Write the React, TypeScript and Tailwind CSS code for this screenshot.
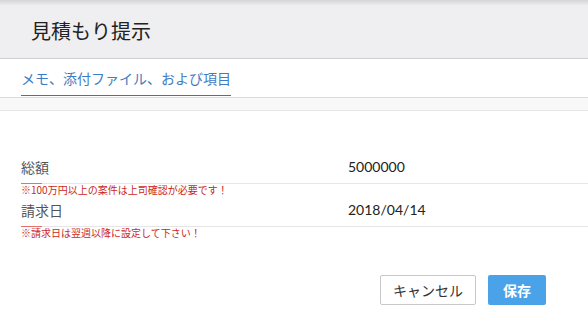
const JP = "font-['Noto_Sans_CJK_JP','Noto_Sans',sans-serif]";

type Field = { label: string; value: string; note: string };

const FIELDS: Field[] = [
  { label: '総額', value: '5000000', note: '※100万円以上の案件は上司確認が必要です！' },
  { label: '請求日', value: '2018/04/14', note: '※請求日は翌週以降に設定して下さい！' },
];

export default function App() {
  return (
    <main className={`flex h-[319px] w-[588px] flex-col overflow-hidden bg-white ${JP}`}>
      {/* ヘッダー */}
      <header className="flex h-[59px] items-center border-b border-[#cfcfd3] bg-[linear-gradient(to_bottom,#d4d4d6,#efeff1_6px)] pl-[31px]">
        <h1 className="text-[20px] leading-[28px] text-[#222] pt-[4px]">見積もり提示</h1>
      </header>

      {/* タブ */}
      <nav className="flex h-[39px] border-b border-[#dcdcdf] pl-[21px]">
        <div className="h-[37px] border-b border-[#3a75b8] pt-[9px] pb-[7px] text-[14px] leading-[20px] text-[#3f7dc2]">
          メモ、添付ファイル、および項目
        </div>
      </nav>
      <div className="h-[13px] border-b border-[#e6e6e8] bg-[#f8f8f9]" />

      {/* 項目 */}
      <section className="pl-[21px] pt-[46px]">
        {FIELDS.map((f, i) => (
          <div key={f.label} className={i > 0 ? 'pt-[4px]' : ''}>
            <div className="flex pb-[6px] text-[14px] leading-[20px]">
              <span className="w-[327px] text-[#555]">{f.label}</span>
              <span className="font-['Lato','Open_Sans',sans-serif] text-[14px] text-[#222]">{f.value}</span>
            </div>
            <div className="flex h-px">
              <div className="w-[21px] bg-[#e8706a]" />
              <div className="flex-1 bg-[#e6e6e8]" />
            </div>
            <p className="text-[10px] leading-[12px] text-[#cc1f1a]">{f.note}</p>
          </div>
        ))}
      </section>

      {/* ボタン */}
      <footer className="mt-[36px] flex justify-end gap-[12px] pr-[42px]">
        <button className="h-[30px] w-[96px] rounded-[2px] border border-[#c8c8cc] bg-white text-[14px] text-[#333]">
          キャンセル
        </button>
        <button className="h-[30px] w-[58px] rounded-[2px] bg-[#4aa3e9] text-[14px] font-bold text-white">
          保存
        </button>
      </footer>
    </main>
  );
}
